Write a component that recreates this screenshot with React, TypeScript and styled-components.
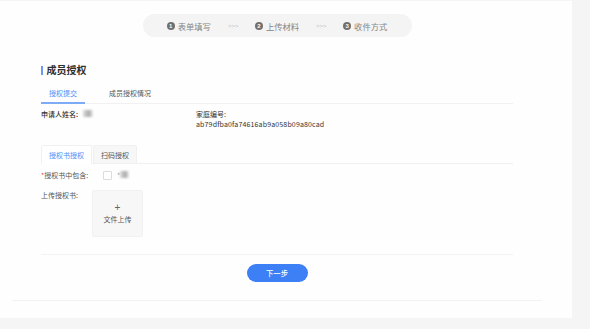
import React from 'react';
import styled, { createGlobalStyle } from 'styled-components';

const BLUE = '#3d7ff5';
const FONT = `'Noto Sans CJK SC', 'Noto Sans', sans-serif`;

const GlobalStyle = createGlobalStyle`
    html, body {
        margin: 0;
        padding: 0;
        background: #f5f5f5;
        font-family: ${FONT};
    }
`;

const Panel = styled.div`
    width: 572px;
    height: 317px;
    margin-top: 1px;
    background: #fefefe;
    padding-top: 13px;
    box-sizing: border-box;
    display: flex;
    flex-direction: column;
`;

const Content = styled.div`
    margin-left: 41px;
    width: 472px;
    display: flex;
    flex-direction: column;
`;

const StepBar = styled.div`
    align-self: center;
    width: 269px;
    height: 23px;
    border-radius: 12px;
    background: #f4f4f4;
    display: flex;
    align-items: center;
    justify-content: center;
    gap: 17px;
`;

const Step = styled.div`
    display: flex;
    align-items: center;
    gap: 3px;
    font-size: 8.3px;
    line-height: 10px;
    color: #858585;
`;

const StepNum = styled.span`
    width: 8px;
    height: 8px;
    border-radius: 50%;
    background: #707070;
    color: #fff;
    font-size: 6px;
    font-weight: 700;
    line-height: 8px;
    text-align: center;
    font-family: 'Liberation Sans', sans-serif;
`;

const Arrow = styled.span`
    width: 10px;
    font-size: 6px;
    line-height: 10px;
    color: #bdbdbd;
    font-family: 'Liberation Sans', sans-serif;
`;

const Title = styled.div`
    margin-top: 26px;
    display: flex;
    align-items: center;
    gap: 4px;
    font-size: 10px;
    line-height: 14px;
    font-weight: 700;
    color: #2f2f2f;
`;

const TitleBar = styled.span`
    width: 1.5px;
    height: 9px;
    background: #6b98f2;
`;

const Tabs = styled.div`
    margin-top: 10px;
    display: flex;
    gap: 16px;
    border-bottom: 1px solid #f1f1f1;
`;

const Tab = styled.div<{ $active?: boolean }>`
    padding: 0 8px 3px;
    font-size: 7px;
    line-height: 12px;
    color: ${(p) => (p.$active ? '#4e8cf6' : '#555')};
    border-bottom: 2px solid ${(p) => (p.$active ? '#7eabf6' : 'transparent')};
    margin-bottom: -1px;
`;

const InfoRow = styled.div`
    margin-top: 5px;
    display: grid;
    grid-template-columns: 155px 1fr;
    font-size: 7px;
    line-height: 10px;
    color: #333;
`;

const InfoLabel = styled.span<{ $strong?: boolean }>`
    display: flex;
    align-items: flex-start;
    gap: 5px;
    font-weight: ${(p) => (p.$strong ? 500 : 400)};
`;

const Code = styled.div`
    letter-spacing: 0.15px;
`;

const Blur = styled.span<{ $w: number }>`
    display: inline-block;
    width: ${(p) => p.$w}px;
    height: 7px;
    margin-top: 1px;
    background: linear-gradient(90deg, #ddd, #aaa 60%, #eee);
    filter: blur(1.2px);
`;

const CardTabs = styled.div`
    margin-top: 16px;
    display: flex;
    border-bottom: 1px solid #f0f0f0;
`;

const CardTab = styled.div<{ $active?: boolean }>`
    height: 17px;
    padding: 0 7px;
    display: flex;
    align-items: center;
    font-size: 7px;
    color: ${(p) => (p.$active ? '#4e8cf6' : '#555')};
    background: ${(p) => (p.$active ? '#fff' : '#f7f7f7')};
    border: 1px solid #f0f0f0;
    border-bottom-color: ${(p) => (p.$active ? '#fff' : '#f0f0f0')};
    border-radius: 2px 2px 0 0;
    margin-bottom: -1px;
    margin-right: 1px;
`;

const FormRow = styled.div<{ $top: number }>`
    margin-top: ${(p) => p.$top}px;
    display: flex;
    align-items: flex-start;
    font-size: 7px;
    line-height: 10px;
    color: #555;
`;

const FormLabel = styled.span<{ $w: number }>`
    width: ${(p) => p.$w}px;
    flex-shrink: 0;
`;

const Required = styled.span<{ $muted?: boolean }>`
    color: ${(p) => (p.$muted ? '#999' : '#e5484d')};
`;

const Check = styled.span`
    width: 7px;
    height: 7px;
    margin-top: 1px;
    border: 1px solid #dcdcdc;
    border-radius: 1px;
    background: #fff;
    margin-right: 5px;
`;

const Upload = styled.div`
    width: 51px;
    height: 47px;
    background: #f7f7f7;
    border: 1px solid #f1f1f1;
    box-sizing: border-box;
    border-radius: 2px;
    display: flex;
    flex-direction: column;
    align-items: center;
    justify-content: center;
    gap: 1px;
    color: #555;
`;

const Plus = styled.span`
    font-size: 10px;
    line-height: 10px;
    font-weight: 300;
    color: #666;
    font-family: 'Liberation Sans', sans-serif;
`;

const UploadText = styled.span`
    font-size: 7px;
    line-height: 10px;
`;

const Divider = styled.div`
    margin-top: 17px;
    height: 1px;
    background: #f3f3f3;
`;

const NextButton = styled.button`
    align-self: center;
    margin-top: 9px;
    width: 61px;
    height: 18px;
    border: none;
    border-radius: 9px;
    background: ${BLUE};
    color: #fff;
    font-family: ${FONT};
    font-size: 7.3px;
    font-weight: 500;
    padding: 0;
`;

const FooterLine = styled.div`
    margin: 18px 0 0 12px;
    width: 530px;
    height: 1px;
    background: #f3f3f3;
`;

const steps = ['表单填写', '上传材料', '收件方式'];

const App = () => (
    <>
        <GlobalStyle />
        <Panel>
            <Content>
                <StepBar>
                    {steps.map((s, i) => (
                        <React.Fragment key={s}>
                            {i > 0 && <Arrow>&gt;&gt;&gt;</Arrow>}
                            <Step>
                                <StepNum>{i + 1}</StepNum>
                                {s}
                            </Step>
                        </React.Fragment>
                    ))}
                </StepBar>
                <Title>
                    <TitleBar />
                    成员授权
                </Title>
                <Tabs>
                    <Tab $active>授权提交</Tab>
                    <Tab>成员授权情况</Tab>
                </Tabs>
                <InfoRow>
                    <InfoLabel $strong>
                        申请人姓名:
                        <Blur $w={10} />
                    </InfoLabel>
                    <div>
                        <div>家庭编号:</div>
                        <Code>ab79dfba0fa74616ab9a058b09a80cad</Code>
                    </div>
                </InfoRow>
                <CardTabs>
                    <CardTab $active>授权书授权</CardTab>
                    <CardTab>扫码授权</CardTab>
                </CardTabs>
                <FormRow $top={6}>
                    <FormLabel $w={62}>
                        <Required>*</Required>授权书中包含:
                    </FormLabel>
                    <Check />
                    <Required $muted>*</Required>
                    <Blur $w={9} />
                </FormRow>
                <FormRow $top={10}>
                    <FormLabel $w={51}>上传授权书:</FormLabel>
                    <Upload>
                        <Plus>+</Plus>
                        <UploadText>文件上传</UploadText>
                    </Upload>
                </FormRow>
                <Divider />
                <NextButton>下一步</NextButton>
            </Content>
            <FooterLine />
        </Panel>
    </>
);

export default App;
